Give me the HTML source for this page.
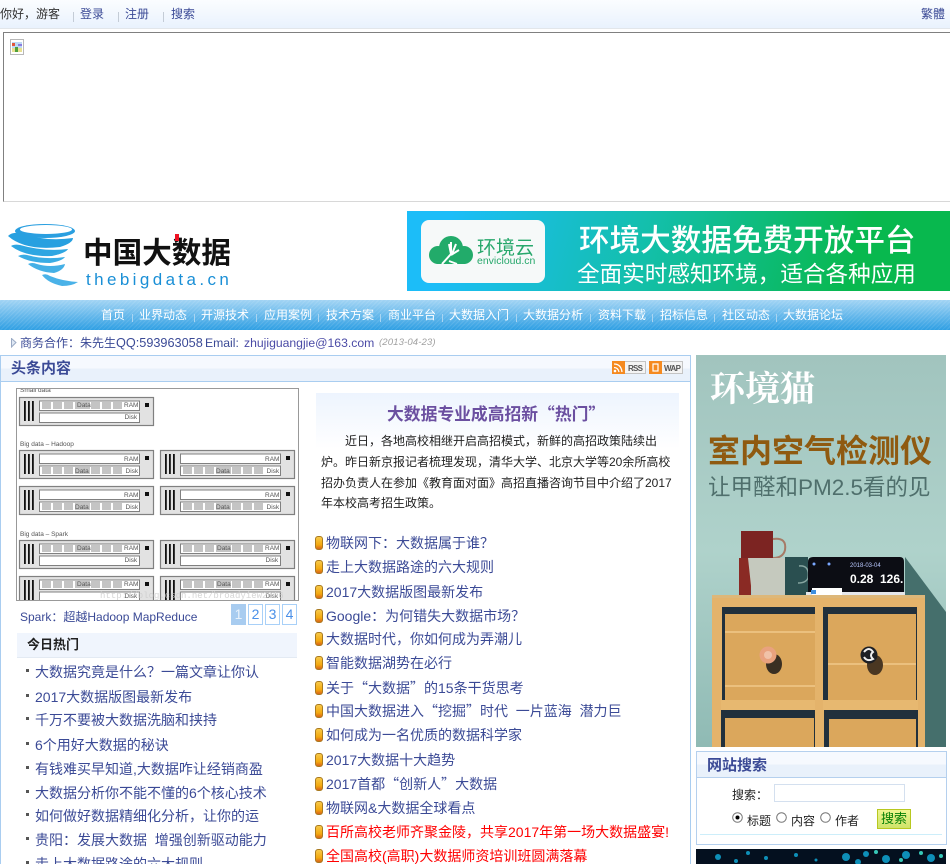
<!DOCTYPE html>
<html lang="zh">
<head>
<meta charset="utf-8">
<title>中国大数据</title>
<style>
html,body{margin:0;padding:0;background:#fff;width:950px;height:864px;overflow:hidden;}
#w0{position:absolute;left:0;top:0;width:950px;height:864px;overflow:hidden;font-family:"Liberation Sans","WenQuanYi Zen Hei","Noto Sans CJK SC",sans-serif;font-size:12px;color:#222;}
.a{position:absolute;white-space:nowrap;line-height:18px;}
.b{color:#3b4a96;}
.q{font-family:"Noto Sans CJK SC",sans-serif;}
.n{position:absolute;top:306px;color:#fff;line-height:18px;white-space:nowrap;}
.s{position:absolute;top:314px;width:1px;height:8px;background:#a9d5f2;}
.t{position:absolute;top:12px;width:1px;height:10px;background:#c4ccd6;}
.h{left:35px;font-size:14px;color:#3b4a96;}
.h:before{content:"";position:absolute;left:-9px;top:6px;width:3px;height:3px;background:#555;}
.g{left:326px;font-size:14px;color:#3b4a96;}
.g:before{content:"";position:absolute;left:-11px;top:2px;width:6px;height:12px;border:1px solid #a97a20;border-radius:3px;background:linear-gradient(#f7c94a,#f3a90f 65%,#d8641a);}
.r{color:#f00;}
.p{position:absolute;top:604px;width:13px;height:19px;border:1px solid #a8d0f8;color:#4a90e8;font-size:14px;line-height:19px;text-align:center;}
</style>
</head>
<body>
<div id="w0">
<!-- top bar -->
<div class="a" style="left:0;top:0;width:950px;height:28px;background:linear-gradient(#fbfdff,#e9f2fd);border-bottom:1px solid #e2e6ea;"></div>
<div class="a" style="left:0;top:5px;color:#333;">你好，游客</div>
<div class="t" style="left:73px"></div><div class="a b" style="left:80px;top:5px;">登录</div>
<div class="t" style="left:118px"></div><div class="a b" style="left:125px;top:5px;">注册</div>
<div class="t" style="left:163px"></div><div class="a b" style="left:171px;top:5px;">搜索</div>
<div class="a b" style="left:921px;top:5px;">繁體</div>
<!-- iframe box -->
<div class="a" style="left:3px;top:32px;width:947px;height:168px;border:1px solid #d8d8d8;border-top-color:#808080;border-left-color:#808080;border-right:0;"></div>
<svg class="a" style="left:10px;top:39px" width="14" height="16"><rect x=".5" y=".5" width="13" height="15" fill="#fff" stroke="#b8b8b8"/><rect x="2" y="3" width="10" height="10" fill="#bcd8f4"/><rect x="2" y="4" width="3" height="3" fill="#e2563a"/><rect x="8" y="5" width="4" height="2" fill="#8a7ce0"/><rect x="2" y="9" width="10" height="4" fill="#e8e090"/><rect x="5" y="8" width="3" height="5" fill="#4fa03a"/></svg>
<!-- logo -->
<svg class="a" style="left:5px;top:220px" width="80" height="72" viewBox="5 220 80 72">
<ellipse cx="45" cy="231" rx="30" ry="7" fill="#2a9fe0"/><ellipse cx="46" cy="229.500" rx="26" ry="4.500" fill="#fff"/>
<path d="M8 236Q12 232 20 233Q45 242 73 238Q73 243 60 247Q25 251 8 236Z" fill="#27a0e0"/>
<path d="M11 246Q14 244 20 245Q45 252 68 249Q66 253 52 256Q25 257 11 246Z" fill="#2ea6e2"/>
<path d="M18 256Q22 254 27 255Q45 260 65 257Q62 261 50 263Q30 263 18 256Z" fill="#3aace4"/>
<path d="M28 264Q32 262 37 264Q50 268 65 264Q64 270 54 273Q38 272 28 264Z" fill="#45b0e6"/>
<path d="M42 275Q46 273 50 276Q62 281 78 282Q72 286 62 286Q48 283 42 275Z" fill="#4ab2e8"/>
</svg>
<div class="a" style="left:83px;top:232px;font:bold 29.6px/38px 'Noto Sans CJK SC',sans-serif;color:#111;">中国大数据</div>
<div class="a" style="left:175px;top:234px;width:4px;height:7px;background:#ee1122;"></div>
<div class="a" style="left:86px;top:270px;font:17px/20px 'Liberation Sans',sans-serif;letter-spacing:3.4px;color:#1a8fd6;">thebigdata.cn</div>
<!-- banner -->
<div class="a" style="left:407px;top:211px;width:543px;height:80px;background:linear-gradient(105deg,#1cbdf8 8%,#13bfa8 45%,#08b84e 82%);"></div>
<div class="a" style="left:421px;top:220px;width:124px;height:63px;background:#f6f9f9;border-radius:8px;"></div>
<svg class="a" style="left:427px;top:233px" width="50" height="40"><g fill="#22ab6a"><circle cx="24" cy="15" r="12"/><circle cx="11" cy="22" r="9"/><circle cx="37" cy="22" r="9"/><rect x="10" y="20" width="28" height="11"/></g><path d="M15 31L24 21L22 11M24 21V9M25 21L29 11M24 22L32 17M22 28L30 31" stroke="#fff" stroke-width="2" fill="none"/></svg>
<div class="a" style="left:477px;top:236px;font:19px/22px 'Noto Sans CJK SC',sans-serif;color:#27a86c;">环境云</div>
<div class="a" style="left:477px;top:255px;font:10.5px/12px 'Liberation Sans',sans-serif;color:#27a86c;">envicloud.cn</div>
<div class="a" style="left:579px;top:218px;font:500 30.6px/40px 'Noto Sans CJK SC',sans-serif;color:#fff;">环境大数据免费开放平台</div>
<div class="a" style="left:577px;top:256px;font:22.6px/34px 'Noto Sans CJK SC',sans-serif;color:#fff;">全面实时感知环境，适合各种应用</div>
<!-- nav -->
<div class="a" style="left:0;top:300px;width:950px;height:30px;background:repeating-linear-gradient(135deg,rgba(255,255,255,.1) 0 1px,rgba(255,255,255,0) 1px 3px),linear-gradient(#a2d4f4,#2f9fe3);"></div>
<div class="n" style="left:101px">首页</div><div class="s" style="left:132px"></div>
<div class="n" style="left:139px">业界动态</div><div class="s" style="left:194px"></div>
<div class="n" style="left:201px">开源技术</div><div class="s" style="left:256px"></div>
<div class="n" style="left:264px">应用案例</div><div class="s" style="left:318px"></div>
<div class="n" style="left:326px">技术方案</div><div class="s" style="left:380px"></div>
<div class="n" style="left:388px">商业平台</div><div class="s" style="left:442px"></div>
<div class="n" style="left:449px">大数据入门</div><div class="s" style="left:516px"></div>
<div class="n" style="left:523px">大数据分析</div><div class="s" style="left:590px"></div>
<div class="n" style="left:598px">资料下载</div><div class="s" style="left:652px"></div>
<div class="n" style="left:660px">招标信息</div><div class="s" style="left:714px"></div>
<div class="n" style="left:722px">社区动态</div><div class="s" style="left:776px"></div>
<div class="n" style="left:783px">大数据论坛</div>
<!-- notice -->
<svg class="a" style="left:11px;top:338px" width="6" height="10"><path d="M.5 .5L5 4.500L.5 9Z" fill="#dfe8f4" stroke="#9aaac4"/></svg>
<div class="a b" style="left:20px;top:334px;">商务合作：朱先生</div>
<div class="a b" style="left:116px;top:334px;font-size:12.7px;">QQ:593963058</div>
<div class="a b" style="left:205px;top:334px;font-size:12.2px;">Email:</div>
<div class="a" style="left:244px;top:334px;font-size:12.2px;color:#4b4ba6;">zhujiguangjie@163.com</div>
<div class="a" style="left:379px;top:334px;color:#a0a0a0;font-style:italic;font-size:9.6px;letter-spacing:.1px;">(2013-04-23)</div>
<!-- main panel -->
<div class="a" style="left:0;top:355px;width:689px;height:520px;border:1px solid #a9cdf0;"></div>
<div class="a" style="left:1px;top:356px;width:689px;height:25px;background:linear-gradient(#f6f9fe 50%,#e9f1fb 50%);border-bottom:1px solid #a9cdf0;"></div>
<div class="a" style="left:11px;top:360px;font-size:15px;font-weight:bold;color:#3b4a96;">头条内容</div>
<svg class="a" style="left:612px;top:361px" width="71" height="14">
<rect x=".5" y=".5" width="33" height="12" fill="#f4f4f4" stroke="#c4c4c4"/><rect width="13" height="13" fill="#f58a20"/><path d="M2 3Q9 3 10 11M2 6.500Q6 6.500 7 11" stroke="#fff" stroke-width="1.300" fill="none"/><circle cx="3" cy="10" r="1.300" fill="#fff"/>
<text x="16" y="10" font-family="Liberation Sans" font-size="8" font-weight="bold" fill="#555" textLength="15">RSS</text>
<rect x="37.500" y=".5" width="33" height="12" fill="#f4f4f4" stroke="#c4c4c4"/><rect x="37" width="13" height="13" fill="#f58a20"/><rect x="41" y="3" width="5" height="7" fill="none" stroke="#fff" stroke-width="1.200"/>
<text x="52" y="10" font-family="Liberation Sans" font-size="8" font-weight="bold" fill="#555" textLength="17">WAP</text>
</svg>
<!-- diagram -->
<svg class="a" style="left:16px;top:388px;border:1px solid #999;background:#fff;" width="281" height="211" viewBox="17 389 281 211">
<defs>
<g id="sv"><rect x=".5" y=".5" width="134" height="28" fill="#e2e2e2" stroke="#808080" stroke-width="1.200"/><rect x="5" y="4" width="1.800" height="20" fill="#111"/><rect x="9" y="4" width="1.800" height="20" fill="#111"/><rect x="13" y="4" width="1.800" height="20" fill="#111"/><rect x="20.500" y="4" width="100" height="9.500" fill="#fff" stroke="#808080"/><rect x="20.500" y="16" width="100" height="9.500" fill="#fff" stroke="#808080"/><rect x="126" y="6" width="4" height="4" fill="#111"/></g>
<g id="ch" fill="#c4c4c4"><rect x="23" width="9" height="7"/><rect x="34" width="9" height="7"/><rect x="45" width="9" height="7"/><rect x="56" width="15" height="7"/><rect x="72" width="9" height="7"/><rect x="83" width="9" height="7"/><rect x="94" width="9" height="7"/></g>
</defs>
<g font-family="Liberation Sans" font-size="6.500" fill="#555">
<text x="20" y="392">Small data</text><text x="20" y="446">Big data – Hadoop</text><text x="20" y="536">Big data – Spark</text>
<use href="#sv" x="19" y="397"/><use href="#ch" x="19" y="402"/><text x="77" y="407">Data</text><text x="124" y="407">RAM</text><text x="124.500" y="419">Disk</text>
<use href="#sv" x="19" y="450"/><use href="#ch" x="19" y="467"/><text x="75" y="473">Data</text><text x="124" y="461">RAM</text><text x="125.500" y="473">Disk</text>
<use href="#sv" x="160" y="450"/><use href="#ch" x="160" y="467"/><text x="216" y="473">Data</text><text x="265" y="461">RAM</text><text x="266.500" y="473">Disk</text>
<use href="#sv" x="19" y="486"/><use href="#ch" x="19" y="503"/><text x="75" y="509">Data</text><text x="124" y="497">RAM</text><text x="125.500" y="509">Disk</text>
<use href="#sv" x="160" y="486"/><use href="#ch" x="160" y="503"/><text x="216" y="509">Data</text><text x="265" y="497">RAM</text><text x="266.500" y="509">Disk</text>
<use href="#sv" x="19" y="540"/><use href="#ch" x="19" y="545"/><text x="77" y="550">Data</text><text x="124" y="550">RAM</text><text x="124.500" y="562">Disk</text>
<use href="#sv" x="160" y="540"/><use href="#ch" x="160" y="545"/><text x="217" y="550">Data</text><text x="265" y="550">RAM</text><text x="265.500" y="562">Disk</text>
<use href="#sv" x="19" y="576"/><use href="#ch" x="19" y="581"/><text x="77" y="586">Data</text><text x="124" y="586">RAM</text><text x="124.500" y="598">Disk</text>
<use href="#sv" x="160" y="576"/><use href="#ch" x="160" y="581"/><text x="217" y="586">Data</text><text x="265" y="586">RAM</text><text x="265.500" y="598">Disk</text>
</g>
<text x="100" y="598" font-family="Liberation Mono" font-size="9" fill="#ccc" opacity=".8">http://blog.csdn.net/broadyiew2006</text>
</svg>
<div class="a b" style="left:20px;top:608px;">Spark：超越Hadoop MapReduce</div>
<div class="p" style="left:231px;background:#a8ccf0;border-color:#a8ccf0;color:#e8f2fc;">1</div>
<div class="p" style="left:248px">2</div><div class="p" style="left:265px">3</div><div class="p" style="left:282px">4</div>
<!-- hot -->
<div class="a" style="left:17px;top:633px;width:280px;height:24px;background:#f0f5fd;border-bottom:1px solid #e3eaf3;"></div>
<div class="a" style="left:27px;top:636px;font-size:13px;font-weight:bold;color:#222;">今日热门</div>
<div class="a h" style="top:663px">大数据究竟是什么？一篇文章让你认</div>
<div class="a h" style="top:688px">2017大数据版图最新发布</div>
<div class="a h" style="top:711px">千万不要被大数据洗脑和挟持</div>
<div class="a h" style="top:736px">6个用好大数据的秘诀</div>
<div class="a h" style="top:760px">有钱难买早知道,大数据咋让经销商盈</div>
<div class="a h" style="top:784px">大数据分析你不能不懂的6个核心技术</div>
<div class="a h" style="top:807px">如何做好数据精细化分析，让你的运</div>
<div class="a h" style="top:831px">贵阳：发展大数据&nbsp; 增强创新驱动能力</div>
<div class="a h" style="top:855px">走上大数据路途的六大规则</div>
<!-- article -->
<div class="a" style="left:316px;top:393px;width:363px;height:56px;background:linear-gradient(#edf4fe,#fff);"></div>
<div class="a" style="left:387px;top:404px;font-size:16.8px;font-weight:bold;color:#6b4fa0;">大数据专业成高招新<span class="q">“</span>热门<span class="q">”</span></div>
<div class="a" style="left:345px;top:432px;">近日，各地高校相继开启高招模式，新鲜的高招政策陆续出</div>
<div class="a" style="left:321px;top:453px;">炉。昨日新京报记者梳理发现，清华大学、北京大学等20余所高校</div>
<div class="a" style="left:321px;top:474px;">招办负责人在参加《教育面对面》高招直播咨询节目中介绍了2017</div>
<div class="a" style="left:321px;top:494px;">年本校高考招生政策。</div>
<!-- links -->
<div class="a g" style="top:534px">物联网下：大数据属于谁？</div>
<div class="a g" style="top:558px">走上大数据路途的六大规则</div>
<div class="a g" style="top:583px">2017大数据版图最新发布</div>
<div class="a g" style="top:607px">Google：为何错失大数据市场？</div>
<div class="a g" style="top:630px">大数据时代，你如何成为弄潮儿</div>
<div class="a g" style="top:654px">智能数据湖势在必行</div>
<div class="a g" style="top:679px">关于<span class="q">“</span>大数据<span class="q">”</span>的15条干货思考</div>
<div class="a g" style="top:702px">中国大数据进入<span class="q">“</span>挖掘<span class="q">”</span>时代&nbsp; 一片蓝海&nbsp; 潜力巨</div>
<div class="a g" style="top:726px">如何成为一名优质的数据科学家</div>
<div class="a g" style="top:751px">2017大数据十大趋势</div>
<div class="a g" style="top:775px">2017首都<span class="q">“</span>创新人<span class="q">”</span>大数据</div>
<div class="a g" style="top:799px">物联网&amp;大数据全球看点</div>
<div class="a g r" style="top:823px">百所高校老师齐聚金陵，共享2017年第一场大数据盛宴!</div>
<div class="a g r" style="top:847px">全国高校(高职)大数据师资培训班圆满落幕</div>
<!-- right photo -->
<svg class="a" style="left:696px;top:355px" width="250" height="392" viewBox="696 355 250 392">
<defs><linearGradient id="w" x1="0" y1="0" x2="0" y2="1"><stop offset="0" stop-color="#a1c4be"/><stop offset=".5" stop-color="#afd2cb"/><stop offset="1" stop-color="#8fbab4"/></linearGradient></defs>
<rect x="696" y="355" width="250" height="392" fill="url(#w)"/>
<path d="M905 557L946 612V747H905Z" fill="#456f6c"/>
<path d="M741 531H773V576H741Z" fill="#7c2422"/><path d="M773 539Q787 537 785 550Q783 558 773 558" fill="none" stroke="#a77a66" stroke-width="2"/>
<rect x="739" y="558" width="12" height="37" fill="#8a2a24"/>
<path d="M748 558H785V595H752Z" fill="#c5c9be"/>
<path d="M785 557H808V595H785Z" fill="#2a4f50"/><path d="M799 566Q810 565 808 578Q806 583 798 583" fill="none" stroke="#86a5a0" stroke-width="1.500"/>
<path d="M808 562Q808 557 813 557H900Q904 557 904 562V592H808Z" fill="#0c0d14"/>
<path d="M806 592H905V600H806Z" fill="#e5e7ea"/>
<rect x="812" y="588" width="30" height="7" fill="#fff"/><rect x="811" y="590" width="5" height="4" fill="#3f8fdf"/>
<g font-family="Liberation Sans" fill="#fff">
<text x="850" y="567" font-size="6" fill="#b9c8ff">2018-03-04</text>
<text x="850" y="583" font-size="12" font-weight="bold">0.28</text><text x="880" y="583" font-size="12" font-weight="bold">126.</text>
</g>
<circle cx="814" cy="564" r="1.500" fill="#7aa8ff"/><circle cx="829" cy="564" r="1.500" fill="#7aa8ff"/>
<rect x="712" y="595" width="213" height="152" fill="#e4b36b"/>
<rect x="712" y="595" width="213" height="3" fill="#ddb779"/>
<rect x="722" y="607" width="93" height="93" fill="#21303c"/>
<rect x="823" y="607" width="94" height="93" fill="#21303c"/>
<rect x="725" y="614" width="90" height="86" fill="#dba75c"/>
<rect x="828" y="614" width="88" height="87" fill="#dba75c"/>
<path d="M725 632H815M725 686H815M828 664H916" stroke="#ebc07e" stroke-width="2"/>
<rect x="721" y="700" width="94" height="10" fill="#e7b870"/>
<rect x="823" y="700" width="95" height="10" fill="#e7b870"/>
<rect x="721" y="710" width="94" height="37" fill="#21303c"/>
<rect x="824" y="710" width="94" height="37" fill="#21303c"/>
<rect x="725" y="718" width="89" height="29" fill="#dba75c"/>
<rect x="829" y="719" width="87" height="28" fill="#dba75c"/>
<ellipse cx="774" cy="664" rx="8" ry="10" fill="#3a2f22"/>
<circle cx="768" cy="655" r="8.500" fill="#e9a27e"/><circle cx="768" cy="655" r="4" fill="#f0c2a8"/>
<ellipse cx="875" cy="665" rx="8" ry="10" fill="#4a3722"/>
<circle cx="869" cy="655" r="8.500" fill="#1d1f24"/><path d="M864 652Q869 646 873 652Q869 655 873 659Q867 662 864 657" fill="none" stroke="#eee" stroke-width="2"/>
<text x="710" y="401" font-family="Noto Serif CJK SC,serif" font-weight="bold" font-size="35" fill="#fff">环境猫</text>
<text x="708" y="462" font-family="Noto Sans CJK SC,sans-serif" font-size="32" font-weight="bold" fill="#8f5a10">室内空气检测仪</text>
<text x="708" y="495" font-family="Liberation Sans,Noto Sans CJK SC,sans-serif" font-size="22.500" fill="#4f6f6c">让甲醛和PM2.5看的见</text>
</svg>
<!-- search box -->
<div class="a" style="left:696px;top:751px;width:249px;height:92px;border:1px solid #b5d0ee;"></div>
<div class="a" style="left:697px;top:752px;width:249px;height:25px;background:linear-gradient(#f6f9fe 50%,#e9f1fb 50%);border-bottom:1px solid #b5d0ee;"></div>
<div class="a" style="left:707px;top:757px;font-size:15px;font-weight:bold;color:#3b4a96;">网站搜索</div>
<div class="a" style="left:732px;top:786px;">搜索：</div>
<div class="a" style="left:774px;top:784px;width:129px;height:16px;border:1px solid #d4e0ef;"></div>
<svg class="a" style="left:732px;top:812px" width="100" height="12"><g fill="#fff" stroke="#777"><circle cx="5.500" cy="5.500" r="4.800"/><circle cx="49.500" cy="5.500" r="4.800"/><circle cx="93.500" cy="5.500" r="4.800"/></g><circle cx="5.500" cy="5.500" r="2" fill="#000"/></svg>
<div class="a" style="left:747px;top:812px;">标题</div>
<div class="a" style="left:791px;top:812px;">内容</div>
<div class="a" style="left:835px;top:812px;">作者</div>
<div class="a" style="left:877px;top:809px;width:32px;height:18px;border:1px solid #b8c820;background:linear-gradient(#eef590,#cfe46a);color:#078007;text-align:center;font-size:13px;line-height:18px;">搜索</div>
<div class="a" style="left:700px;top:834px;width:242px;height:1px;background:#cdeefa;"></div>
<!-- bottom image -->
<svg class="a" style="left:696px;top:849px" width="250" height="15"><rect width="250" height="15" fill="#04101f"/><g fill="#0e8fb8"><circle cx="22" cy="8" r="3"/><circle cx="40" cy="12" r="2"/><circle cx="52" cy="4" r="2"/><circle cx="70" cy="9" r="2"/><circle cx="100" cy="6" r="2"/><circle cx="120" cy="11" r="1.500"/><circle cx="150" cy="8" r="4"/><circle cx="162" cy="13" r="3"/><circle cx="170" cy="5" r="3"/><circle cx="190" cy="10" r="4"/><circle cx="210" cy="6" r="4"/><circle cx="235" cy="9" r="4"/></g><g fill="#37c8b8"><circle cx="180" cy="3" r="2"/><circle cx="205" cy="11" r="2"/><circle cx="225" cy="4" r="2"/><circle cx="245" cy="7" r="2"/></g></svg>
</div>
</body>
</html>
